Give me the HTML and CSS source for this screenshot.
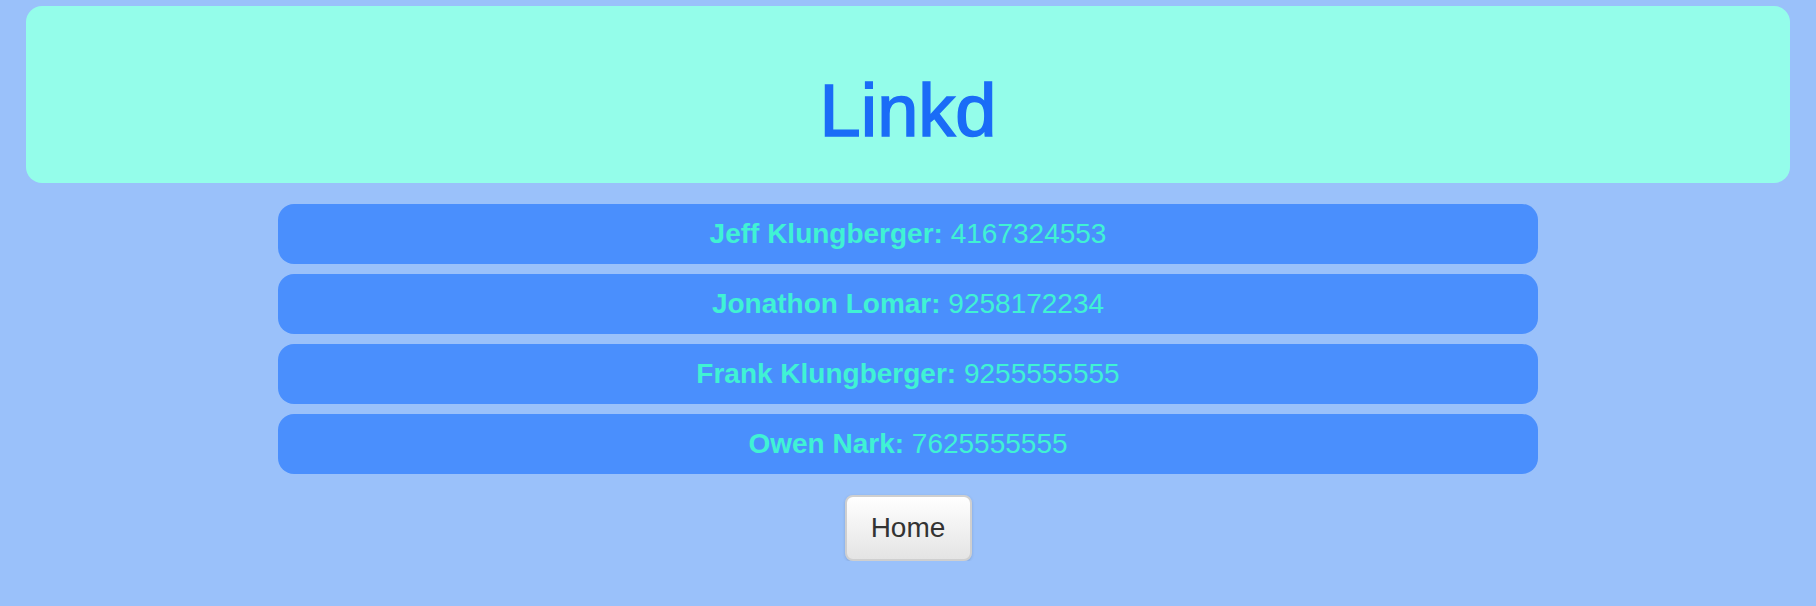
FILE: index.html
```html
<!DOCTYPE html>
<html>
<head>
<meta charset="utf-8">
<link rel="stylesheet" href="styles.css">
</head>
<body>
  <header class="banner">
    <h1 class="title">Linkd</h1>
  </header>
  <main class="list">
    <div class="contact"><b>Jeff Klungberger:</b> 4167324553</div>
    <div class="contact"><b>Jonathon Lomar:</b> 9258172234</div>
    <div class="contact"><b>Frank Klungberger:</b> 9255555555</div>
    <div class="contact"><b>Owen Nark:</b> 7625555555</div>
  </main>
  <div class="actions">
    <button class="btn">Home</button>
  </div>
</body>
</html>
```

FILE: styles.css
```css
html, body {
  margin: 0;
  padding: 0;
}
body {
  background: #9ac1fa;
  font-family: "Liberation Sans", Arial, Helvetica, sans-serif;
  padding: 6px 26px 0;
}
.banner {
  background: #94fdea;
  border-radius: 16px;
  height: 177px;
  display: flex;
  align-items: center;
  justify-content: center;
}
.title {
  margin: 0;
  padding-top: 32px;
  font-size: 74px;
  font-weight: normal;
  color: #1a6cf7;
  line-height: 1;
  -webkit-text-stroke: 1.6px #1a6cf7;
}
.list {
  width: 1260px;
  margin: 21px auto 0;
  display: flex;
  flex-direction: column;
  gap: 10px;
}
.contact {
  background: #4a8ffd;
  border-radius: 16px;
  height: 60px;
  display: flex;
  align-items: center;
  justify-content: center;
  font-size: 28px;
  color: #40f2d4;
  white-space: pre;
}
.contact b {
  font-weight: bold;
}
.actions {
  display: flex;
  justify-content: center;
  margin-top: 21px;
}
.btn {
  font-family: "Liberation Sans", Arial, sans-serif;
  font-size: 28px;
  color: #333;
  width: 127px;
  height: 66px;
  padding: 0;
  border: 2px solid #cfcfcf;
  border-radius: 8px;
  background: linear-gradient(#ffffff, #e4e4e4);
  box-shadow: 0 1px 3px rgba(0,0,0,0.15);
}
```
